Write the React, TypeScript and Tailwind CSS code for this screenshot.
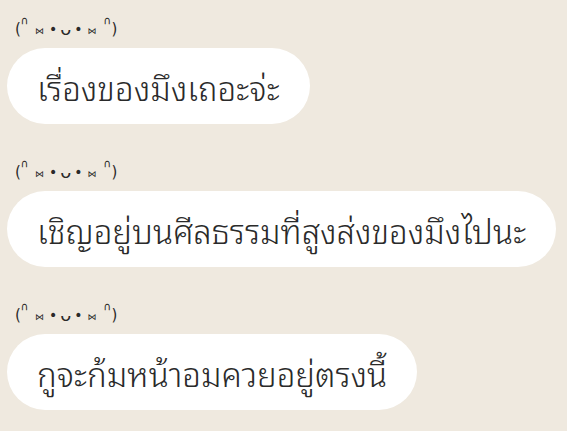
import React from "react";

const msgs = [
  "เรื่องของมึงเถอะจ่ะ",
  "เชิญอยู่บนศีลธรรมที่สูงส่งของมึงไปนะ",
  "กูจะก้มหน้าอมควยอยู่ตรงนี้",
];

function Kaomoji() {
  return (
    <div className="h-[30px] pt-[8px] flex items-center text-[#2a2a2a] leading-none font-['DejaVu_Sans',sans-serif]">
      <span className="ml-[8px] text-[15px]">(</span>
      <span className="ml-[0px] text-[11px] -translate-y-[9px]">∩</span>
      <span className="ml-[6px] text-[9px] translate-y-[2px]">⋈</span>
      <span className="ml-[5px] text-[14px]">•</span>
      <span className="ml-[3px] text-[18px]">ᴗ</span>
      <span className="ml-[3px] text-[14px]">•</span>
      <span className="ml-[5px] text-[9px] translate-y-[2px]">⋈</span>
      <span className="ml-[7px] text-[11px] -translate-y-[9px]">∩</span>
      <span className="ml-[0px] text-[15px]">)</span>
    </div>
  );
}

export default function App() {
  return (
    <div className="w-[567px] h-[431px] bg-[#efe9df] overflow-hidden pt-[10px] pl-[7px] flex flex-col gap-[29px]">
      {msgs.map((m, i) => (
        <div key={i} className="flex flex-col gap-[8px] items-start">
          <Kaomoji />
          <div className="h-[76px] rounded-full bg-white px-[30px] flex items-center text-[33px] font-light text-[#2a2a2a] leading-none whitespace-nowrap font-['Noto_Sans_Thai_Looped','Noto_Sans_Thai',sans-serif]">
            {m}
          </div>
        </div>
      ))}
    </div>
  );
}
